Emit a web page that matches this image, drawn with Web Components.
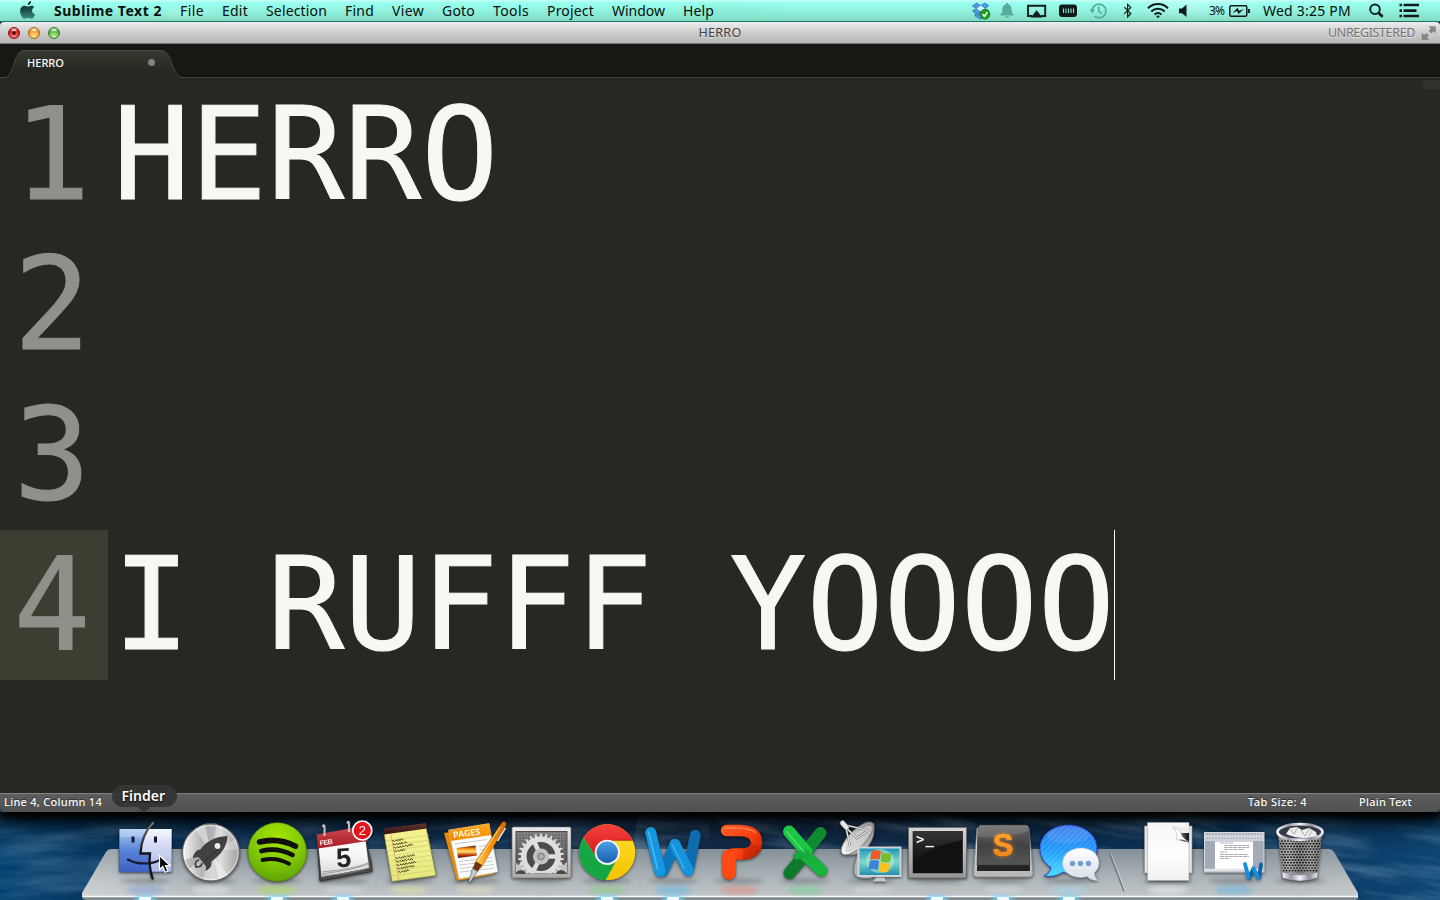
<!DOCTYPE html>
<html lang="en">
<head>
<meta charset="utf-8">
<title>HERRO</title>
<style>
html,body{margin:0;height:100%;overflow:hidden;background:#06203a}
body{font-family:"Noto Sans","Open Sans",sans-serif}
</style>
</head>
<body>
<mac-desktop></mac-desktop>
<script>
const define = (name, html, setup) => {
  const tpl = document.createElement('template');
  customElements.define(name, class extends HTMLElement {
    connectedCallback() {
      if (this.shadowRoot) return;
      const root = this.attachShadow({mode: 'open'});
      tpl.innerHTML = typeof html === 'function' ? html(this) : html;
      root.append(tpl.content.cloneNode(true));
      if (setup) setup(this, root);
    }
  });
};

/* A label whose tracking is adjusted to fill the width given in "w". */
define('fit-text', `<style>:host{display:block;flex:none;white-space:nowrap}span{display:inline-block}</style><span><slot></slot></span>`, (el, root) => {
  const w = +el.getAttribute('w'), s = root.querySelector('span');
  el.style.width = w + 'px';
  const n = el.textContent.length;
  s.style.letterSpacing = ((w - s.getBoundingClientRect().width) / n).toFixed(3) + 'px';
});

/* Menu bar extras. Box: [left, right] in bar coordinates. */
const EXTRAS = {
  apple: [18, 54, `<defs><linearGradient id="g" x2="0" y2="1"><stop offset="0" stop-color="#0a2b28"/><stop offset=".5" stop-color="#1c4b45"/><stop offset="1" stop-color="#3c8f80"/></linearGradient></defs><g transform="translate(-1 0)"><path fill="url(#g)" d="M28.800 5.200c-.3-2 1.200-3.900 3.300-4.200.3 2-1.200 4-3.300 4.200zM35.300 7.100c-3.200 1.900-2.900 5.900.8 7.400-.8 2.200-2.300 4.300-3.900 4.300-1.200 0-1.700-.7-3.200-.7s-2 .7-3.200.7c-2.500 0-4.700-4.300-4.700-7.600 0-3.500 2.200-5.500 4.600-5.500 1.400 0 2.500.9 3.400.9.800 0 2-.9 3.600-.9 1.100 0 2 .5 2.600 1.400z"/></g>`],
  dropbox: [967, 995, `<g fill="#4d9be6" stroke="#1c63a8" stroke-width=".7"><path d="M976.500 3l4 2.500-4 3-4-2.600z"/><path d="M984.800 3l4 2.700-3.800 2.800-4.300-3z"/><path d="M972.500 11l4-2.500 4 3-3.700 2.800z"/><path d="M980.700 11.500l4.200-3 4 2.600-4.200 2.900z"/><path d="M975 14.200l1.800 1 3.700-2.700 4 2.500v1.800l-4 2.200-5.500-3z"/></g><path d="M980.700 5.600l4.200 2.900-4.200 3-4.200-3z" fill="#d8f6ff"/><circle cx="985" cy="14.300" r="4.900" fill="#1fa020" stroke="#0c6b14" stroke-width=".7"/><path d="M982.500 14.300l1.900 2 3-4" fill="none" stroke="#fff" stroke-width="1.600"/>`],
  bell: [995, 1020, `<path fill="#58ab98" d="M1007 3c1 0 1.600.6 1.600 1.500 2.200.7 3 2.500 3 5 0 3 .8 4 2.200 5.200v.8h-13.600v-.8c1.400-1.200 2.200-2.200 2.200-5.200 0-2.500.8-4.300 3-5 0-.9.600-1.500 1.600-1.500zM1005 16.200h4c-.2 1-1 1.600-2 1.600s-1.800-.6-2-1.600z"/>`],
  airplay: [1020, 1053, `<path d="M1032 16h-4V5.800h17.200V16h-4" fill="none" stroke="#101c1a" stroke-width="1.900"/><path d="M1036.600 10.200l5.800 7.300h-11.600z" fill="#101c1a"/>`],
  memory: [1053, 1083, `<rect x="1059" y="4.500" width="18" height="12.500" rx="3" fill="#101c1a"/><path d="M1063.500 8.500v4.500M1066 8.500v4.500M1068.500 8.500v4.500M1071 8.500v4.500M1073.500 8.500v4.500" stroke="#8be6d2" stroke-width="1.100"/>`],
  timemachine: [1083, 1114, `<g fill="none" stroke="#58ab98" stroke-width="1.700"><path d="M1092 11a7 6.800 0 1 1 2.500 5.200"/><path d="M1098.700 6.500v4.700l3.200 2.200"/></g><path d="M1089.500 9.500h5.500l-2.700 3.700z" fill="#58ab98"/>`],
  bluetooth: [1114, 1141, `<path d="M1124.300 7.200l6.500 6.600-3.200 3V4.400l3.200 3-6.500 6.500" fill="none" stroke="#101c1a" stroke-width="1.200"/>`],
  wifi: [1141, 1174, `<g fill="none" stroke="#101c1a" stroke-width="2"><path d="M1148 8.200c5.500-5.500 14.500-5.500 20 0"/><path d="M1151.300 11.500c3.800-3.700 9.600-3.700 13.400 0"/><path d="M1154.500 14.600c2-2 5-2 7 0"/></g><path d="M1156.200 16.300a2.600 2.600 0 0 1 3.600 0l-1.800 2z" fill="#101c1a"/>`],
  volume: [1174, 1209, `<path d="M1179 8.500h3l4.500-4v12.500l-4.500-3.800h-3z" fill="#101c1a"/>`],
  battery: [1226, 1263, `<rect x="1229.800" y="5.800" width="17" height="10.400" rx="1.500" fill="none" stroke="#101c1a" stroke-width="1.500"/><path d="M1248 9h1.900v4h-1.900z" fill="#101c1a"/><path d="M1232.500 13l5-5.200 1.500 3 5-1.800-5.500 5-1.500-3z" fill="#101c1a"/>`],
  search: [1351, 1394, `<circle cx="1375" cy="9.300" r="4.800" fill="none" stroke="#101c1a" stroke-width="1.900"/><path d="M1378.500 12.800l4.200 4" stroke="#101c1a" stroke-width="2.600"/>`],
  list: [1394, 1440, `<path d="M1399.500 5h2.500M1399.500 10.600h2.500M1399.500 16h2.500M1403.500 5h15.500M1403.500 10.600h13M1403.500 16h15.500" stroke="#101c1a" stroke-width="2.600"/>`]
};
define('menu-extra', el => {
  const [a, b, art] = EXTRAS[el.getAttribute('name')];
  return `<style>:host{display:block;flex:none;width:${b - a}px;height:22px}svg{display:block}</style><svg width="${b - a}" height="22" viewBox="${a} 0 ${b - a} 22">${art}</svg>`;
});

define('menu-bar', `<style>
:host{display:flex;flex:none;height:22px;box-sizing:border-box;padding-left:18px;border-bottom:1px solid #1c7362;line-height:21px;font-size:14px;color:#06110f;
background:radial-gradient(ellipse 40px 9px at 185px 13px,#c5fff266,#0000),radial-gradient(ellipse 60px 12px at 730px 12px,#7de8cf66,#0000),radial-gradient(ellipse 90px 20px at 1190px 3px,#d9fff866,#0000),linear-gradient(#c6fff4,#98fff0 3px,#92f6e2 9px,#83dcc6 20px)}
nav{display:flex;gap:18px;flex:1}
b{font-weight:700}
.pct{font-size:12px}
.gap{width:2px}
</style>
<menu-extra name="apple"></menu-extra>
<nav><fit-text w="108"><b>Sublime Text 2</b></fit-text><fit-text w="24">File</fit-text><fit-text w="26">Edit</fit-text><fit-text w="61">Selection</fit-text><fit-text w="29">Find</fit-text><fit-text w="32">View</fit-text><fit-text w="33">Goto</fit-text><fit-text w="36">Tools</fit-text><fit-text w="47">Project</fit-text><fit-text w="53">Window</fit-text><fit-text w="31">Help</fit-text></nav>
${['dropbox','bell','airplay','memory','timemachine','bluetooth','wifi','volume'].map(n => `<menu-extra name="${n}"></menu-extra>`).join('')}
<fit-text class="pct" w="15">3%</fit-text><span class="gap"></span><menu-extra name="battery"></menu-extra><fit-text w="88">Wed 3:25 PM</fit-text><menu-extra name="search"></menu-extra><menu-extra name="list"></menu-extra>`);

define('title-bar', `<style>
:host{display:grid;grid-template-columns:1fr auto 1fr;align-items:center;flex:none;height:22px;box-sizing:border-box;border-bottom:1px solid #777;border-radius:4px 4px 0 0;font-size:12.500px;line-height:21px;color:#404040;background:linear-gradient(#ededed,#d5d5d5 8px,#b5b5b5)}
.lights,.right{display:flex}.right{justify-content:flex-end;color:#747474}
svg{display:block}fit-text{text-shadow:0 1px 0 #fff8}
.right svg{margin-left:6px;margin-right:3px}
</style>
<div class="lights"><svg width="64" height="21" viewBox="0 0 64 21"><defs>
<radialGradient id="r" cy=".75"><stop stop-color="#ff8c88"/><stop offset="1" stop-color="#d01f24"/></radialGradient>
<radialGradient id="y" cy=".8"><stop stop-color="#ffe98a"/><stop offset="1" stop-color="#ee9a2e"/></radialGradient>
<radialGradient id="n" cy=".8"><stop stop-color="#c9f7a0"/><stop offset="1" stop-color="#5cb548"/></radialGradient></defs>
<circle cx="14" cy="11" r="5.500" fill="url(#r)" stroke="#8c1518"/><circle cx="14" cy="11" r="1.900" fill="#5a0508"/>
<circle cx="34" cy="11" r="5.500" fill="url(#y)" stroke="#a3631b"/><circle cx="54" cy="11" r="5.500" fill="url(#n)" stroke="#377a2b"/>
<g fill="#fffa"><ellipse cx="14" cy="7.800" rx="2.800" ry="1.500"/><ellipse cx="34" cy="7.800" rx="2.800" ry="1.500"/><ellipse cx="54" cy="7.800" rx="2.800" ry="1.500"/></g></svg></div>
<fit-text w="43">HERRO</fit-text>
<div class="right"><fit-text w="87">UNREGISTERED</fit-text><svg width="16" height="21" viewBox="0 0 16 21"><g fill="#858585" transform="translate(.3 0)"><path d="M7 4.200h7.500v7.300l-2.300-2.300-2.200 2.200-2.700-2.700 2.200-2.200z"/><path d="M.5 10.500v7.500H8l-2.400-2.400 2-2-2.700-2.700-2 2z"/></g></svg></div>`);

define('tab-bar', `<style>
:host{display:flex;flex:none;height:34px;background:linear-gradient(#171813 30px,#11120e 33px)}
.tab{display:grid;width:184px;height:35px}
.tab>*{grid-area:1/1}
.row{display:flex;align-items:center;justify-content:space-between;padding:2px 29px 0 27px;font-size:11px;font-weight:500;color:#fff}
i{width:7px;height:7px;border-radius:50%;background:#82827e}
.rest{flex:1;box-sizing:border-box;border-bottom:1px solid #3f403a}
svg{display:block}
</style>
<div class="tab"><svg width="184" height="35"><defs><linearGradient id="t" x2="0" y2="1"><stop stop-color="#37382f"/><stop offset=".7" stop-color="#272822"/></linearGradient></defs>
<path d="M0 33.500H4C15 33 13 6.500 24 6.500H161C173 6.500 171 33 183 33.500H184V35H0z" fill="url(#t)"/><path d="M0 33.500H4C15 33 13 6.500 24 6.500H161C173 6.500 171 33 183 33.500H184" fill="none" stroke="#484942"/></svg>
<div class="row"><fit-text w="37">HERRO</fit-text><i></i></div></div><div class="rest"></div>`);

define('code-line', el => `<style>
:host{display:flex;height:150px;font:128px/150px "DejaVu Sans Mono",monospace;color:#f8f8f2;white-space:pre;-webkit-text-stroke:1px}
.n{width:94.500px;padding-left:13.500px;color:#8f908a}
:host([active]) .n{background:#3e3d32}
.t{padding-left:5px}
.c{width:1px;background:#f8f8f0;margin-left:-1px}
</style><div class="n">${el.getAttribute('n')}</div><div class="t"><slot></slot></div>${el.hasAttribute('active') ? '<div class="c"></div>' : ''}`);

define('code-editor', `<style>
:host{display:flex;flex:1;min-height:0;background:#272822;justify-content:space-between}
.code{padding-top:2px}
.map{width:17px;height:9px;margin-top:2px;background:#31322c;border-radius:2px 0 0 2px}
</style><div class="code"><code-line n="1">HERRO</code-line><code-line n="2"></code-line><code-line n="3"></code-line><code-line n="4" active>I RUFFF YOOOO</code-line></div><div class="map"></div>`);

define('status-bar', `<style>
:host{display:flex;flex:none;height:19px;box-sizing:border-box;border-top:1px solid #828282;background:linear-gradient(#5e5e5e,#505050);font-size:11px;font-weight:500;line-height:16px;color:#fff;padding:0 28px 0 4px;border-radius:0 0 4px 4px;text-shadow:0 -1px 1px #0008}
.s{flex:1}.g{width:52px}
</style><fit-text w="98">Line 4, Column 14</fit-text><span class="s"></span><fit-text w="59">Tab Size: 4</fit-text><span class="g"></span><fit-text w="53">Plain Text</fit-text>`);

define('sublime-window', `<style>:host{display:flex;flex-direction:column;height:790px;flex:none;box-shadow:0 5px 9px 2px #000,0 8px 26px 6px #000b}</style>
<title-bar></title-bar><tab-bar></tab-bar><code-editor></code-editor><status-bar></status-bar>`);

const lin = (id, stops, dir = 'x2="0" y2="1"') => `<linearGradient id="${id}" ${dir}>${stops.split(' ').map((c, i, a) => `<stop offset="${i / (a.length - 1)}" stop-color="${c}"/>`).join('')}</linearGradient>`;
const gear = (cx, cy, r, n, fill) => {
  let t = '';
  for (let i = 0; i < n; i++) t += `<path d="M${cx - 1.500} ${cy - r + 1}l.7-4.500h1.600l.7 4.500z" transform="rotate(${i * 360 / n} ${cx} ${cy})"/>`;
  return `<g fill="${fill}">${t}<circle cx="${cx}" cy="${cy}" r="${r - 2.300}" fill="none" stroke="${fill}" stroke-width="5.500"/></g>`;
};
const mesh = () => {
  let s = '';
  for (let y = 0; y < 13; y++) for (let x = 0; x < 15; x++) s += `<ellipse cx="${1279 + x * 3 + (y % 2) * 1.500}" cy="${841 + y * 2.700}" rx="1.050" ry=".85"/>`;
  return s;
};
const scribble = () => {
  let s = '';
  [16, 20, 27, 14, 0, 26, 22, 28, 24, 15].forEach((w, i) => {
    if (!w) return;
    s += `M${391 + i * .3} ${840 + i * 3.500}`;
    for (let x = 0; x < w; x += 3) s += x % 4 === 3 ? `m.6 0` : `q.6-1.800 1.200-.3t1.400${(x % 2 ? -.2 : .2)}`;
  });
  return `<path transform="rotate(-6 405 855) translate(3 0)" d="${s}" fill="none" stroke="#33331c" stroke-width=".9"/>`;
};

/* Dock artwork: centre x, drawing, reflection colour. All icons share the dock's coordinate space. */
const ART = {
  finder: [145, `<defs>${lin('a', '#a9cbf4 #5a82d8 #3f62c4')}${lin('b', '#f2f5fd #cdd3f2 #aeb8e6')}${lin('c', '#777 #111 #111')}</defs>
   <rect x="119" y="829" width="52.500" height="43" fill="url(#a)"/><path d="M153 829h18.500v43H150c-1-6-1-12-.5-17.500H140C142 843 146 835 149 829z" fill="url(#b)"/><rect x="119" y="829" width="52.500" height="8" fill="#fff" opacity=".22"/><path d="M119.500 829v43h52" fill="none" stroke="#3556ac" opacity=".6"/>
   <path d="M133 836.500v6M155.500 836.500v6" stroke="#141a2c" stroke-width="3"/><path d="M128 859.500c9 5.500 24 5 32 .5" fill="none" stroke="#151a30" stroke-width="2.200" stroke-linecap="round"/><path d="M153 823c-8 8-12 19-12.500 30.500h9.500c-1 9-.2 17 2.500 25" fill="none" stroke="url(#c)" stroke-width="2.300" stroke-linecap="round"/>`, '#7898e0'],
  launchpad: [211, `<defs>${lin('a', '#f4f4f4 #b6b6b6 #dedede #9d9d9d', '')}</defs><circle cx="211" cy="852.500" r="28.500" fill="url(#a)" stroke="#686868" stroke-width="1.200"/><g opacity=".35"><path d="M211 852L195 829l9-5z" fill="#fff"/><path d="M211 852l17 23-9 4z" fill="#fff"/><path d="M211 852l-22 17-5-9z" fill="#777"/><path d="M211 852l25-13 2 10z" fill="#eee"/><path d="M211 852l-6-29h12z" fill="#888"/><path d="M211 852l-8 28h13z" fill="#eee"/></g><circle cx="211" cy="852.500" r="27" fill="none" stroke="#fff" opacity=".6"/>
   <path d="M227.500 836c-13 .5-22 6-27 13.500-4 0-6 3-8 8.500l6-1 7.500 9.500-.5 4.500c5-2.500 6.500-5 6-9.500 9-7 15-13 16-25.500z" fill="#414141"/><path d="M222 842c-4 8-10 14-18 19" fill="none" stroke="#2b2b2b" stroke-width=".8"/><circle cx="217.500" cy="846" r="2.900" fill="#ededed"/><path d="M199 860c-4 1-4 4-3 7 2.500 0 6-.5 6-4" fill="none" stroke="#414141" stroke-width="1.800"/>`, '#eee'],
  spotify: [277, `<defs><radialGradient id="a" cy=".25" r=".75"><stop stop-color="#a7e400"/><stop offset=".6" stop-color="#80c806"/><stop offset="1" stop-color="#5fa406"/></radialGradient></defs><circle cx="277.300" cy="852" r="29.300" fill="url(#a)" stroke="#558d0a" stroke-width=".6"/><g fill="none" stroke="#0d0f08" stroke-linecap="round"><path d="M259.500 842c12-3 25-1.500 36 4.200" stroke-width="5.500"/><path d="M261.500 851c10-2.500 21-1.300 31 4" stroke-width="4.800"/><path d="M262.500 860c9-2.200 18-1 26.500 3.800" stroke-width="3.900"/></g>`, '#a5e531'],
  calendar: [343, `<defs>${lin('a', '#cf4a51 #a81c24')}${lin('b', '#fff #f3f3f3 #d6d6d6')}</defs><path d="M317 835l3 46 52-9.500-.5-8-8-30z" fill="#4b4b4b" stroke="#333"/><path d="M318.500 846l3 31 47.500-9-3.500-28z" fill="url(#b)"/><path d="M322 876q35-3 48.500-9M322 874q35-5 47.500-10M322 872q32-3 46-9l1-3" stroke="#8d8d8d" stroke-width=".8" fill="none"/><path d="M316.500 834.500l47-8.500 4.500 15-50 7.500z" fill="url(#a)"/><text x="320" y="845.500" transform="rotate(-8 320 845)" font-size="7" font-weight="700" fill="#ffe9e9" font-family="Liberation Sans,sans-serif" textLength="13">FEB</text><text x="343.500" y="867" transform="rotate(-4 343 858)" text-anchor="middle" font-size="27" font-weight="700" fill="#242424" font-family="Liberation Sans,sans-serif">5</text><path d="M324.500 836v-9c0-2.500-2-2-1.300 0M349 832v-8.500c0-2.500-2-2-1.300 0" fill="none" stroke="#b9bfc3" stroke-width="2.200"/><circle cx="362.300" cy="830.500" r="9.500" fill="#e6141b" stroke="#fff" stroke-width="1.700"/><text x="362.300" y="835.400" text-anchor="middle" font-size="13.500" fill="#fff" font-family="Liberation Sans,sans-serif">2</text>`, '#ddd'],
  notes: [409, `<defs>${lin('a', '#f6f08b #eff08c #e2e77c')}${lin('b', '#603430 #33130f')}</defs><path d="M384 833l42-6 10 48.500-44 6z" fill="url(#a)" stroke="#8e8b45" stroke-width=".7"/><path d="M391 834.500l8 46" stroke="#e79876" stroke-width=".8"/><path d="M386 841l43-6M387 846l43-6M388 851l43-6M389 856l43-6M390 861l43-6M391 866l43-6M391.500 871l43-6M392 876l43-6" stroke="#c8c869" stroke-width=".6"/>${scribble()}<path d="M383.500 828.500l42.500-5.500 1 5.500-43 6z" fill="url(#b)"/>`, '#eeea9a'],
  pages: [475, `<defs>${lin('a', '#ffac1c #f28704')}${lin('b', '#3a0d08 #ff8a12 #ffe27a #c43d08 #451206')}${lin('p', '#ffcf5a #f9930c #c86a06', '')}</defs><path d="M444 833l42-7 8 48-37 7z" fill="#e78a0c"/><path d="M448.500 830l40.500-6.500 9 48.500-39 7z" fill="#fdfdfd" stroke="#bbb" stroke-width=".5"/><path d="M448.500 830l40.500-6.500 2.200 11.500-40.500 6z" fill="url(#a)"/><text x="453.500" y="838" transform="rotate(-7 453 837)" font-family="Lato,sans-serif" font-size="8.500" font-weight="700" fill="#fff" textLength="27">PAGES</text><path d="M456.500 848l19-2.500 1.500 10-19 2.500z" fill="url(#b)"/><g stroke="#a6a6ae" stroke-width=".7" stroke-dasharray="2 .4"><path d="M455 844l32-4.500M479 846.500l10-1.300M479.500 850l10-1.300M480 853.500l10-1.300M459 861.500l33-4M459.500 865l34-4M460 868.500l34-4M460.500 872l34-4"/></g><path d="M502 822.500c2-2 5 0 4 2.800L481 868l-7-4z" fill="url(#p)" stroke="#8a4b0b" stroke-width=".5"/><path d="M505.500 828l-8 13" stroke="#ddd" stroke-width="1.600"/><path d="M500 827l-22 34" stroke="#ffe08c" stroke-width="1"/><path d="M476 861.500l6 3.500-4 6.500-5.500-3z" fill="#6e3411"/><path d="M472.500 868.500l5 3-7.500 11-1.500-1z" fill="#c3c9cf" stroke="#555" stroke-width=".6"/>`, '#f2dfbc'],
  prefs: [541, `<defs>${lin('a', '#ececec #a9a9a9')}${lin('b', '#868686 #484848')}<clipPath id="k"><rect x="516" y="831.500" width="51" height="42"/></clipPath><pattern id="d" width="3" height="3" patternUnits="userSpaceOnUse"><circle cx="1" cy="1" r=".7" fill="#4a4a4a"/></pattern></defs><rect x="512" y="827" width="59" height="51" rx="1.500" fill="url(#a)" stroke="#777" stroke-width=".7"/><rect x="516" y="831.500" width="51" height="42" fill="url(#b)" stroke="#4c4c4c"/><rect x="516" y="831.500" width="51" height="42" fill="url(#d)"/><g clip-path="url(#k)">${gear(521, 876, 11, 16, '#c4c4c4')}${gear(561, 876, 11, 16, '#c4c4c4')}<circle cx="541" cy="856.500" r="20" fill="#4b4b4b"/>${gear(541, 856.500, 19.500, 26, '#dedede')}<path d="M541 856.500L534 841M541 856.500h17M541 856.500l-8 15" stroke="#dedede" stroke-width="4.500"/><circle cx="541" cy="856.500" r="8" fill="#c3c3c3"/><circle cx="541" cy="856.500" r="3.400" fill="#aaa" stroke="#777"/></g>`, '#bbb'],
  chrome: [607, `<defs>${lin('a', '#f5423c #d5171c')}${lin('b', '#ffe02c #f4c300')}${lin('c', '#4aa1e4 #195eaf')}</defs><circle cx="607.300" cy="852.300" r="28" fill="url(#b)"/><path d="M607.300 840.300h25.300A28 28 0 0 0 583.500 837.500L596.900 858.300A12 12 0 0 1 607.300 840.300z" fill="url(#a)"/><path d="M583.500 837.500A28 28 0 0 0 605.500 880.300L617.700 858.300A12 12 0 0 1 596.900 858.300z" fill="#15a744"/><path d="M607.300 840.300h25.300" stroke="#a91411" stroke-width=".7"/><circle cx="607.300" cy="852.300" r="12.600" fill="#f7f7f7"/><circle cx="607.300" cy="852.300" r="10.700" fill="url(#c)"/>`, '#7cd06d'],
  word: [673, `<g fill="none" stroke-linecap="round" stroke-width="11"><path d="M695.200 835.500L688.500 869.500" stroke="#0e6cae"/><path d="M663 871L675 844.500" stroke="#0d76bc"/><path d="M650.700 832.500L660 871.500" stroke="#1596e0"/><path d="M648.700 832L657.500 869" stroke="#4cbaf5" stroke-width="1.500"/><path d="M675 844.500L688.300 870.500" stroke="#1494df"/><path d="M672.500 845L684 868" stroke="#43b3f1" stroke-width="1.300"/></g>`, '#4db6e8'],
  powerpoint: [739, `<defs><linearGradient id="p" x1="722" x2="762" y1="830" y2="858" gradientUnits="userSpaceOnUse"><stop stop-color="#ff5a22"/><stop offset=".6" stop-color="#f63c10"/><stop offset="1" stop-color="#b82204"/></linearGradient></defs><path d="M726.500 830.500H740Q756.500 831 756.500 842.500Q756 853.500 743 854H733" fill="none" stroke="url(#p)" stroke-width="11.500" stroke-linecap="round"/><path d="M750.500 840q3 8-7.500 9v10.500q17-1 19-15-6 6-11.500-4.500z" fill="#a81e04" opacity=".35"/><path d="M729 856v17" stroke="#ff4a14" stroke-width="13.500" stroke-linecap="round"/><path d="M723.500 828h18q10 1 14 5" fill="none" stroke="#ff7f52" stroke-width="1.300"/>`, '#ef7b67'],
  excel: [805, `<g stroke-linecap="round" stroke-width="12"><path d="M820.500 833L808 849" stroke="#0f8a32"/><path d="M789.500 873L804 856" stroke="#0b7a2a"/><path d="M789 831.500L806.500 852" stroke="#1dc746"/><path d="M805 855L821.500 870.500" stroke="#18b23d"/><path d="M797 856q5-3 10-1" stroke="#16a83a" stroke-width="7" fill="none"/><path d="M786.500 831.500L804 852" stroke="#54df70" stroke-width="1.300"/></g>`, '#6cd58b'],
  remote: [871, `<defs>${lin('a', '#fdfdfd #8d8d8d', '')}${lin('b', '#1a8fb8 #7fd8c8 #1c8ab0')}</defs><path d="M858 850c-1 9-5 16-4 23 2 6 12 6 18 5l-7-8z" fill="#aeb2b5" stroke="#777" stroke-width=".6"/><path d="M873.500 823c2 10-1 19-7 25-7 7-16 8-23 6z" fill="#a9a9a9" stroke="#6f6f6f" stroke-width=".7"/><ellipse cx="857.500" cy="838.500" rx="21.500" ry="8.500" transform="rotate(-45 857.500 838.500)" fill="url(#a)" stroke="#777" stroke-width=".9"/><ellipse cx="858.500" cy="839" rx="18" ry="5.500" transform="rotate(-45 858.500 839)" fill="#cfcfcf" opacity=".8"/><path d="M844 826l13 12 12-8M846 828l4 18M845 825l22 5" fill="none" stroke="#6f6f6f" stroke-width="2.200"/><path d="M844 826l13 12 12-8M846 828l4 18M845 825l22 5" fill="none" stroke="#ededed" stroke-width="1.200"/><path d="M842.500 823l4 4.500" stroke="#777" stroke-width="5.500" stroke-linecap="round"/><path d="M842.500 823l4 4.500" stroke="#e6e8e9" stroke-width="4.200" stroke-linecap="round"/><rect x="858.500" y="847.500" width="42" height="28.500" fill="url(#b)" stroke="#d1d5d8" stroke-width="2"/><ellipse cx="880" cy="861" rx="14" ry="12" fill="#b7f2d9" opacity=".5"/><path d="M871.500 851.500q5-2.500 9.500 0l-1.500 8.500q-5-2-9.500 0z" fill="#ee5a24"/><path d="M882 852.500q5 2.500 9.500 0l-1.500 9q-5 2-9.500-.5z" fill="#79bd2c"/><path d="M869.800 861q5-2 9.500 0l-1.600 9q-5-2-9.500 0z" fill="#3f83d6"/><path d="M880.200 862q5 2.500 9.500.5l-1.500 9q-5 2-9.500-.5z" fill="#fbc11c"/><path d="M876 877.500h8l3 4h-14z" fill="#c7cacc"/>`, '#ddd'],
  terminal: [937, `<defs>${lin('a', '#d5d5d5 #959595')}${lin('b', '#343434 #101010')}</defs><rect x="908.500" y="827.500" width="58" height="50.500" fill="url(#a)" stroke="#6d6d6d"/><rect x="912.500" y="831" width="50.500" height="42.500" fill="#111" stroke="#fff6" stroke-width=".6"/><path d="M913 831h50v9q-35 6-50 23z" fill="url(#b)"/><text x="916" y="844" font-family="DejaVu Sans Mono,monospace" font-weight="700" font-size="14" fill="#f5f5f5" textLength="18">&gt;_</text>`, '#bbb'],
  sublime: [1003, `<defs>${lin('a', '#6b6b6b #424242 #565656')}${lin('b', '#f4f4f4 #b5b5b5')}${lin('s', '#ffb13a #f4770a')}</defs><path d="M977 828h52l4 45q0 4-3 4h-54q-3 0-2.500-4z" fill="url(#b)" stroke="#888" stroke-width=".7"/><path d="M981 825.500h45q2.500 0 3 3l1 42.500h-53l1-42.500q.5-3 3-3z" fill="#222"/><path d="M981 825h45q2.500 0 3 3l1 37h-53l1-37q.5-3 3-3z" fill="url(#a)" stroke="#3a3a3a" stroke-width=".6"/><path d="M978 837q25 2 51-6v-4q-1-2-3-2h-45q-3 0-3 3z" fill="#fff" opacity=".12"/><text x="1003" y="855.500" text-anchor="middle" font-family="Liberation Sans,sans-serif" font-size="31" font-weight="700" fill="url(#s)" stroke="#ff9a25" stroke-width=".6" style="filter:drop-shadow(0 0 2px #ff8b1aaa)">S</text>`, '#ddd'],
  messages: [1069, `<defs>${lin('a', '#2f72ea #1f9cfb #4ddcff')}${lin('b', '#fff #d6e0ea')}<pattern id="h" width="4" height="4" patternUnits="userSpaceOnUse" patternTransform="rotate(45)"><path d="M0 0h2v4H0z" fill="#fff" opacity=".1"/></pattern></defs><path d="M1068.500 825c16 0 28.500 10 28.500 23s-12 25-28.500 25q-3 0-6-.6-8 5.500-18.500 3.600 6-2.500 7-8.500c-7-4.500-11-11-11-19.500 0-13 12.500-23 28.500-23z" fill="url(#a)" stroke="#2434ae" stroke-width=".8"/><path d="M1068.500 825c16 0 28.500 10 28.500 23s-12 25-28.500 25c-16.500 0-28.500-12-28.500-25s12.500-23 28.500-23z" fill="url(#h)"/><ellipse cx="1068" cy="835" rx="21" ry="8.500" fill="#fff" opacity=".1"/><path d="M1081 848c10.500 0 18 6.500 18 15q0 6-4.500 9.500 0 5 3.500 8-7 .5-11-4-3 1-6 1c-10.500 0-18.500-6-18.500-14.500s8-15 18.500-15z" fill="url(#b)" stroke="#a9b8c8" stroke-width=".6"/><g fill="#759fca"><circle cx="1072.500" cy="863.500" r="2.700"/><circle cx="1080.500" cy="863.500" r="2.700"/><circle cx="1088.500" cy="863.500" r="2.700"/></g>`, '#9fdcf0'],
  documents: [1168, `<defs>${lin('a', '#f5f5f5 #fff #f0f0f0')}${lin('b', '#888 #111', '')}</defs><path d="M1144.500 826h47.500v47h-47.500z" fill="#e5e5e5" stroke="#999" stroke-width=".6"/><path d="M1147.500 822.500h41.500v58h-41.500z" fill="url(#a)" stroke="#aaa" stroke-width=".6"/><path d="M1173 827h16v6h-13z" fill="#ececec"/><path d="M1178 833h11v9.500l-9-2z" fill="url(#b)"/><path d="M1173 826.500q5 6 4 14 3-2.500 12 1.500-8-5-8-9-3-4-8-6.500z" fill="#fff" stroke="#aaa" stroke-width=".5"/>`, '#fff'],
  window: [1234, `<rect x="1204.500" y="832.500" width="59.500" height="39.500" fill="#a3abb9" stroke="#d6d9de"/><rect x="1205" y="833" width="59" height="8" fill="#d0d4da"/><path d="M1206 834h56" stroke="#8090a8" stroke-dasharray="2 1"/><path d="M1206 838.500h55" stroke="#a5afbf" stroke-dasharray="2 1"/><path d="M1215 841.500h38v28h-38z" fill="#fff"/><g stroke="#92959c" stroke-width=".8" stroke-dasharray="4 .6"><path d="M1220 843h13M1224 845.500h25M1224 847.500h25M1224 849.500h20M1220 852h7M1220 854.500h28M1220 856.500h29M1220 858.500h10"/></g><path d="M1205 870h58" stroke="#e0e2e6" stroke-width="2.500"/><g fill="none" stroke-width="3.800" stroke-linecap="round"><path d="M1261 864.500l-2 13M1249.500 877.500l4-9" stroke="#0d62a8"/><path d="M1245 864l3.500 13.500M1253.500 868l4.500 9.500" stroke="#1690dc"/></g>`, '#4db6e8'],
  trash: [1300, `<defs>${lin('a', '#8a8a8a #b5b5b5 #858585 #aaa #777', '')}${lin('b', '#f9f9ff #9a9aa8 #f4f4fa #8e8e9c #eee', '')}<clipPath id="k"><path d="M1279 838L1283 873H1317L1321 838z"/></clipPath></defs><path d="M1278 834l4.500 42q17.500 7 35 0l4.500-42z" fill="url(#a)"/><g fill="#1a1a1a" clip-path="url(#k)">${mesh()}</g><path d="M1282 872q18 6 36 0l-.8 6q-17.500 6-34.500 0z" fill="url(#b)" stroke="#6d6d7a" stroke-width=".5"/><ellipse cx="1300" cy="832" rx="22.500" ry="7.800" fill="#353944" stroke="url(#b)" stroke-width="2.800"/><path d="M1286 834l4-6 7-1 5 3 7-2 7 4 1 4q-16 5-31-2z" fill="#eee"/><path d="M1290 829l4 5 4-7M1301 830l4 6 5-8M1312 831l-3 5" stroke="#aaa" fill="none"/>`, '#bbb']
};
define('dock-icon', el => {
  const [cx, art, glow] = ART[el.getAttribute('name')];
  const lamp = el.hasAttribute('running') ? `<ellipse cx="${cx}" cy="899" rx="11" ry="3.500" fill="#72cdfa" filter="url(#blur)"/><rect x="${cx - 6}" y="897" width="12" height="3" rx="1" fill="#f1fdff"/>` : '';
  return `<style>:host{display:block;flex:none;width:66px;height:88px}svg{display:block}.art{filter:drop-shadow(0 1px 1.500px #0009)}</style>
  <svg width="66" height="88" viewBox="${cx - 33} 812 66 88"><defs><filter id="blur" x="-50%" y="-100%" width="200%" height="300%"><feGaussianBlur stdDeviation="2"/></filter></defs>
  <ellipse cx="${cx}" cy="890" rx="19" ry="4.500" fill="${glow}" opacity=".42" filter="url(#blur)"/><ellipse cx="${cx}" cy="881" rx="25" ry="2.500" fill="#38424a" opacity=".35" filter="url(#blur)"/>
  <g class="art">${art}</g>${lamp}</svg>`;
});

define('dock-shelf', `<style>
:host{display:grid;height:88px}
:host>*{grid-area:1/1}
.icons{display:flex;padding-left:112px;position:relative}
.sep{width:33px;flex:none}
svg{display:block}
</style>
<svg width="1440" height="88" viewBox="0 812 1440 88"><defs>${lin('a', '#858f97 #9ba4aa #b1b8bc #c0c6c9')}<linearGradient id="e" x1="0" x2="1"><stop stop-color="#fff" stop-opacity=".25"/><stop offset=".08" stop-color="#fff" stop-opacity="0"/><stop offset=".92" stop-color="#fff" stop-opacity="0"/><stop offset="1" stop-color="#fff" stop-opacity=".1"/></linearGradient></defs>
<path d="M111 849H1329Q1332 849 1334 852L1358 893V897H82V893L106 852Q108 849 111 849z" fill="url(#a)"/><path d="M111 849H1329Q1332 849 1334 852L1358 893V897H82V893L106 852Q108 849 111 849z" fill="url(#e)"/>
<path d="M82 897H1358.500Q1358.500 899 1356 900H85Q82 899 82 897z" fill="#7f8a90"/><path d="M83 896.500H1358" stroke="#fafcfc" stroke-width="1.300"/>
<path d="M1109.500 853.500L1124 891.500" stroke="#666f76" stroke-width="1.200"/><path d="M1111 853.500L1125.500 891.500" stroke="#dfe3e5" stroke-width=".5"/></svg>
<div class="icons">${['finder*','launchpad','spotify*','calendar*','notes','pages','prefs','chrome*','word*','powerpoint','excel','remote','terminal*','sublime*','messages*','|','documents','window','trash'].map(n => n === '|' ? '<span class="sep"></span>' : `<dock-icon name="${n.replace('*', '')}"${n.endsWith('*') ? ' running' : ''}></dock-icon>`).join('')}</div>`);

define('dock-tooltip', `<style>
:host{position:absolute;left:112px;top:785px;width:65px;height:22px;border-radius:11px;background:#353535f2;color:#fff;font-size:14px;font-weight:600;line-height:21px;display:flex;justify-content:center;text-shadow:0 1px 2px #000;z-index:3}
:host::after{content:"";position:absolute;left:26px;top:22px;border:6px solid transparent;border-top-color:#353535;border-bottom:0}
</style><fit-text w="46"><slot></slot></fit-text>`);

define('mouse-pointer', `<style>:host{position:absolute;left:158px;top:854px;z-index:4}svg{display:block}</style>
<svg width="14" height="20"><path d="M1.500 1.500v14l3.300-3 2.400 5.700 2.700-1.200-2.400-5.500h4.500z" fill="#050505" stroke="#fff" stroke-width="1.200"/></svg>`);

define('mac-desktop', `<style>
:host{display:flex;flex-direction:column;width:1440px;height:900px;overflow:hidden;position:relative;background:#032b4c}
.sea{display:grid;height:88px;flex:none}
.sea>*{grid-area:1/1}
.wave{display:block}
menu-bar{position:relative;z-index:2}
sublime-window{position:relative}
dock-shelf{position:relative;z-index:1}
</style>
<menu-bar></menu-bar><sublime-window></sublime-window>
<div class="sea"><svg class="wave" width="1440" height="88"><defs><linearGradient id="w"><stop stop-color="#03406f"/><stop offset=".12" stop-color="#0a3157"/><stop offset=".5" stop-color="#132b46"/><stop offset=".85" stop-color="#0b3459"/><stop offset="1" stop-color="#0d4675"/></linearGradient><filter id="f" x="0" y="0" width="100%" height="100%"><feTurbulence type="fractalNoise" baseFrequency=".009 .06" numOctaves="4" seed="7"/><feColorMatrix values="0 0 0 0 .32  0 0 0 0 .52  0 0 0 0 .70  2 0 0 0 -.800"/><feGaussianBlur stdDeviation="1.200 .5"/></filter></defs><rect width="1440" height="88" fill="url(#w)"/><g transform="rotate(-3 0 40)"><rect x="-50" y="-40" width="760" height="190" filter="url(#f)" opacity=".35"/></g><g transform="rotate(9 1300 40)"><rect x="640" y="-110" width="1000" height="340" filter="url(#f)" opacity=".5"/></g></svg>
<dock-shelf></dock-shelf></div>
<dock-tooltip>Finder</dock-tooltip><mouse-pointer></mouse-pointer>`);
</script>
</body>
</html>
